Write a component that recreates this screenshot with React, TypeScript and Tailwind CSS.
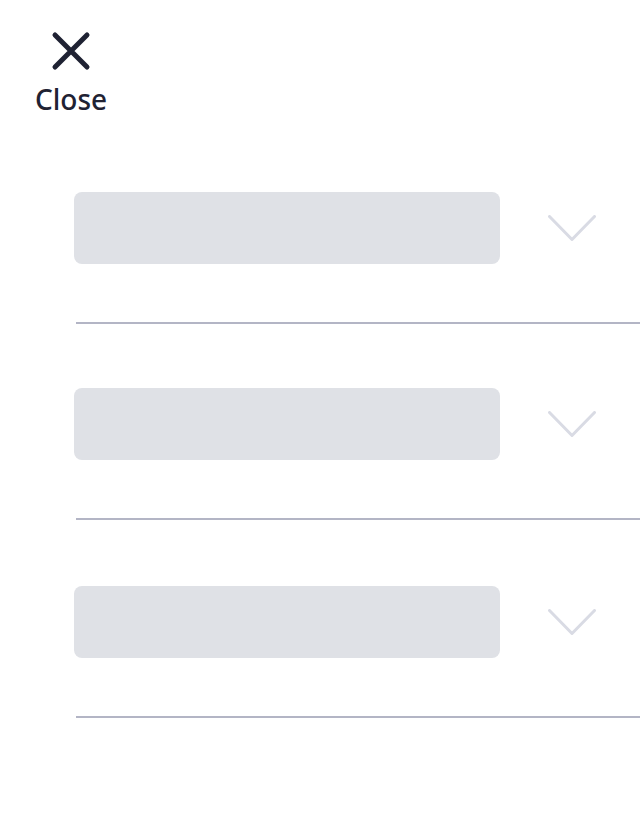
import React from "react";

const rows = ["pt-16", "pt-16", "pt-[66px]"];

const Chevron = () => (
  <svg width="48" height="27" viewBox="0 0 48 27" fill="none">
    <path
      d="M1.5 1.5 L24 24.5 L46.5 1.5"
      stroke="#d9dbe4"
      strokeWidth="3"
      strokeLinecap="round"
      strokeLinejoin="round"
    />
  </svg>
);

export default function App() {
  return (
    <div className="min-h-screen w-full bg-white font-['Noto_Sans',sans-serif]">
      {/* Close button */}
      <div className="pl-[35px] pt-[31px]">
        <button className="flex flex-col items-center text-[#1f2233]">
          <svg width="40" height="40" viewBox="0 0 40 40" fill="none">
            <path
              d="M4 4 L36 36 M36 4 L4 36"
              stroke="#1f2233"
              strokeWidth="5"
              strokeLinecap="round"
            />
          </svg>
          <span className="mt-[12px] text-[28px] font-medium leading-[32px]">Close</span>
        </button>
      </div>

      {/* Skeleton list */}
      <div className="mt-[13px] pl-[74px]">
        {rows.map((pad, i) => (
          <div key={i} className={pad}>
            <div className="flex items-center">
              <div className="h-[72px] w-[426px] rounded-lg bg-[#dfe1e6]" />
              <div className="ml-[48px]">
                <Chevron />
              </div>
            </div>
            <div className="mt-[58px] ml-[2px] h-[2px] bg-[#b3b5c5]" />
          </div>
        ))}
      </div>
    </div>
  );
}
